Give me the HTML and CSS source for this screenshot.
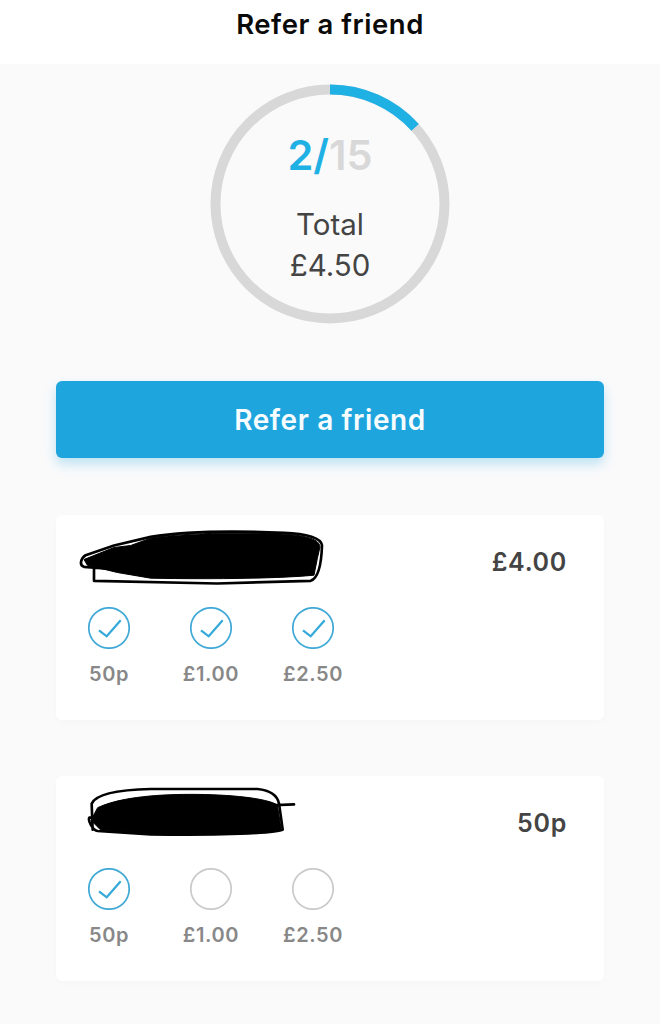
FILE: index.html
```html
<!DOCTYPE html>
<html lang="en">
<head>
<meta charset="utf-8">
<title>Refer a friend</title>
<link rel="stylesheet" href="styles.css">
</head>
<body>
<header class="topbar"><h1 class="topbar-title">Refer a friend</h1></header>
<main class="content">
  <section class="ring">
    <svg class="ring-svg" viewBox="0 0 240 240" aria-hidden="true">
      <circle class="ring-track" cx="120" cy="120" r="114.5"/>
      <path class="ring-progress" d="M120 5.5A114.5 114.5 0 0 1 205.1 43.4"/>
    </svg>
    <div class="ring-text">
      <div class="count"><span class="count-done">2/</span><span class="count-total">15</span></div>
      <div class="total">Total</div>
      <div class="total">£4.50</div>
    </div>
  </section>
  <button class="cta">Refer a friend</button>
  <section class="card">
    <div class="card-head">
      <svg class="scribble scribble-a" viewBox="85 60 735 170" aria-hidden="true">
        <path class="scribble-line" d="M130 175V212L500 220L780 212C800 205 812 170 814 105C812 85 770 70 700 68C560 62 400 64 300 80L190 106L105 135C90 145 85 165 100 170L200 178"/>
        <path class="scribble-fill" d="M100 148L190 112L240 106L300 84C400 68 560 66 700 72C770 76 806 88 808 110L800 145L790 195C700 204 500 208 300 204L200 187L110 165Z"/>
      </svg>
      <span class="price">£4.00</span>
    </div>
    <div class="rewards">
      <div class="reward"><svg class="tick" viewBox="0 0 42 42"><circle class="tick-on" cx="21" cy="21" r="20.2"/><path class="tick-mark" d="M11 23.3L18.7 29.3L32.7 13.3"/></svg><span class="reward-label">50p</span></div>
      <div class="reward"><svg class="tick" viewBox="0 0 42 42"><circle class="tick-on" cx="21" cy="21" r="20.2"/><path class="tick-mark" d="M11 23.3L18.7 29.3L32.7 13.3"/></svg><span class="reward-label">£1.00</span></div>
      <div class="reward"><svg class="tick" viewBox="0 0 42 42"><circle class="tick-on" cx="21" cy="21" r="20.2"/><path class="tick-mark" d="M11 23.3L18.7 29.3L32.7 13.3"/></svg><span class="reward-label">£2.50</span></div>
    </div>
  </section>
  <section class="card">
    <div class="card-head">
      <svg class="scribble scribble-b" viewBox="108 50 628 150" aria-hidden="true">
        <path class="scribble-line" d="M125 178L122 100C135 70 210 58 300 56L620 56C660 60 680 75 685 100L696 178C680 188 500 196 300 192L140 182C125 180 110 150 115 142L300 120L730 102"/>
        <path class="scribble-fill" d="M140 112C200 84 300 72 420 72C540 72 650 84 680 104L692 180C600 192 400 194 300 190L150 180L120 150Z"/>
      </svg>
      <span class="price">50p</span>
    </div>
    <div class="rewards">
      <div class="reward"><svg class="tick" viewBox="0 0 42 42"><circle class="tick-on" cx="21" cy="21" r="20.2"/><path class="tick-mark" d="M11 23.3L18.7 29.3L32.7 13.3"/></svg><span class="reward-label">50p</span></div>
      <div class="reward"><svg class="tick" viewBox="0 0 42 42"><circle class="tick-off" cx="21" cy="21" r="20.2"/></svg><span class="reward-label">£1.00</span></div>
      <div class="reward"><svg class="tick" viewBox="0 0 42 42"><circle class="tick-off" cx="21" cy="21" r="20.2"/></svg><span class="reward-label">£2.50</span></div>
    </div>
  </section>
</main>
</body>
</html>
```
FILE: styles.css
```css
* { box-sizing: border-box; }
html, body { margin: 0; height: 100%; }
body {
  background: #fafafb;
  font-family: Inter, "Noto Sans", sans-serif;
  overflow: hidden;
}
.topbar {
  height: 64px;
  background: #fff;
  display: flex;
  justify-content: center;
  padding-top: 7px;
}
.topbar-title {
  margin: 0;
  font-size: 27.5px;
  line-height: 34px;
  font-weight: 600;
  letter-spacing: .55px;
  color: #0a0a0a;
}
.content {
  padding: 20px 56px 0;
  display: flex;
  flex-direction: column;
}
.ring {
  position: relative;
  width: 240px;
  height: 240px;
  align-self: center;
}
.ring-svg { display: block; width: 240px; height: 240px; }
.ring-track { fill: none; stroke: #d8d8d8; stroke-width: 10; }
.ring-progress { fill: none; stroke: #1fb0e4; stroke-width: 10; }
.ring-text {
  position: absolute;
  inset: 0;
  display: flex;
  flex-direction: column;
  align-items: center;
  padding-top: 48px;
}
.count {
  font-size: 41.5px;
  line-height: 46px;
  font-weight: 600;
  margin-bottom: 26px;
}
.count-done { color: #1fb0e4; }
.count-total { color: #d8d8d8; }
.total {
  font-size: 29.5px;
  line-height: 40.5px;
  color: #444;
}
.cta {
  margin-top: 57px;
  height: 77px;
  border: 0;
  border-radius: 6px;
  background: #1fa5de;
  box-shadow: 0 6px 12px rgba(31, 165, 222, .28);
  color: #f7fcff;
  font-family: inherit;
  font-size: 28px;
  font-weight: 600;
  letter-spacing: .6px;
  padding: 0;
}
.card {
  height: 205px;
  background: #fff;
  border-radius: 6px;
  box-shadow: 0 2px 6px rgba(0, 0, 0, .02);
  margin-top: 57px;
  padding: 0 37px 0 2px;
}
.card + .card { margin-top: 56px; }
.card-head {
  height: 92px;
  display: flex;
  justify-content: space-between;
  align-items: center;
}
.scribble { align-self: flex-start; display: block; }
.scribble-a { width: 245px; height: 57px; margin: 15px 0 0 21px; }
.scribble-b { width: 209px; height: 50px; margin: 11px 0 0 29px; }
.scribble-line { fill: none; stroke: #000; stroke-width: 8; stroke-linecap: round; stroke-linejoin: round; }
.scribble-fill { fill: #000; stroke: #000; stroke-width: 3; }
.price {
  font-size: 25px;
  font-weight: 600;
  letter-spacing: .7px;
  color: #444;
  margin-top: 2px;
}
.rewards {
  display: grid;
  grid-template-columns: repeat(3, 102px);
}
.reward {
  display: flex;
  flex-direction: column;
  align-items: center;
}
.tick { display: block; width: 42px; height: 42px; }
.tick-on { fill: none; stroke: #40a9d6; stroke-width: 1.7; }
.tick-off { fill: none; stroke: #cacaca; stroke-width: 1.7; }
.tick-mark { fill: none; stroke: #35a9d9; stroke-width: 2.2; }
.reward-label {
  margin-top: 12px;
  font-size: 20px;
  line-height: 26px;
  font-weight: 600;
  letter-spacing: .6px;
  color: #888;
}
```
